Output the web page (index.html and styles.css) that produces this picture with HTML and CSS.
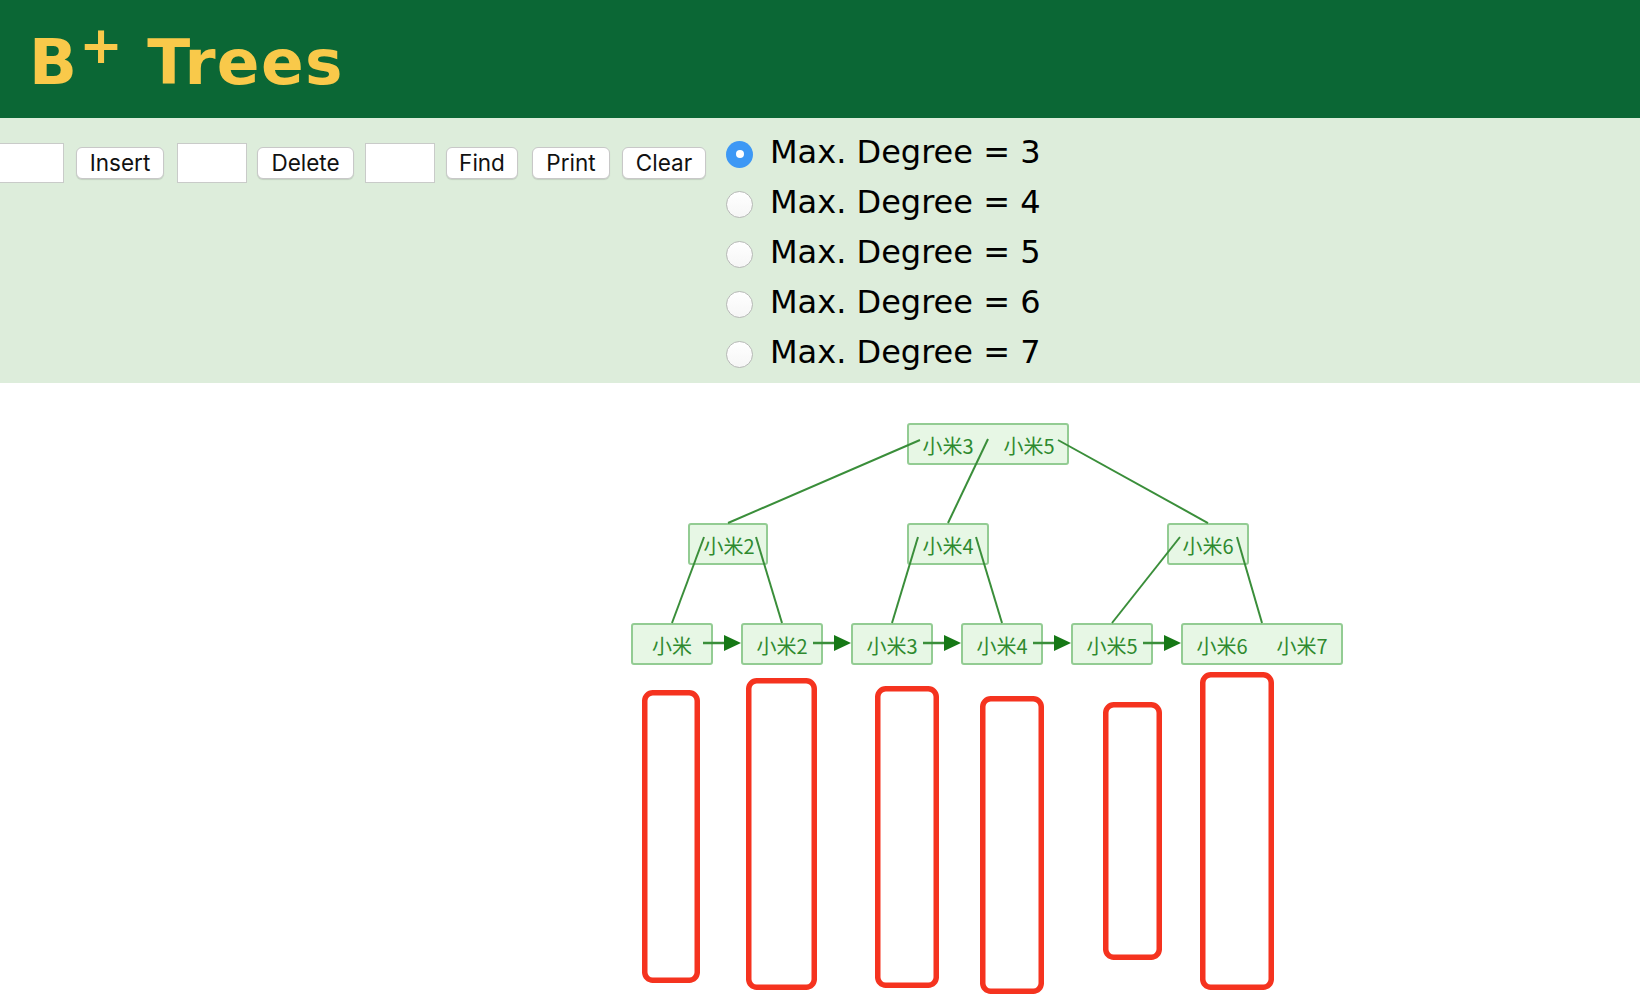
FILE: index.html
```html
<!DOCTYPE html>
<html lang="en">
<head>
<meta charset="utf-8">
<title>B+ Trees</title>
<link rel="stylesheet" href="styles.css">
</head>
<body>
<header class="header">
  <h1 class="title">B<sup class="plus">+</sup> Trees</h1>
</header>
<section class="panel">
  <div class="controls">
    <input class="field field-first" type="text">
    <button class="btn btn-insert">Insert</button>
    <input class="field field-2" type="text">
    <button class="btn btn-delete">Delete</button>
    <input class="field field-3" type="text">
    <button class="btn btn-find">Find</button>
    <button class="btn btn-print">Print</button>
    <button class="btn btn-clear">Clear</button>
  </div>
  <div class="degrees">
    <label class="degree"><input class="radio" type="radio" name="deg" checked><span class="degree-text">Max. Degree = 3</span></label>
    <label class="degree"><input class="radio" type="radio" name="deg"><span class="degree-text">Max. Degree = 4</span></label>
    <label class="degree"><input class="radio" type="radio" name="deg"><span class="degree-text">Max. Degree = 5</span></label>
    <label class="degree"><input class="radio" type="radio" name="deg"><span class="degree-text">Max. Degree = 6</span></label>
    <label class="degree"><input class="radio" type="radio" name="deg"><span class="degree-text">Max. Degree = 7</span></label>
  </div>
</section>
<main class="canvas">
  <svg class="tree" width="1640" height="625" viewBox="0 383 1640 625" xmlns="http://www.w3.org/2000/svg">
    <g class="nodes">
      <rect x="908" y="424" width="160" height="40" rx="2"/>
      <rect x="689" y="524" width="78" height="40" rx="2"/>
      <rect x="908" y="524" width="80" height="40" rx="2"/>
      <rect x="1168" y="524" width="80" height="40" rx="2"/>
      <rect x="632" y="624" width="80" height="40" rx="2"/>
      <rect x="742" y="624" width="80" height="40" rx="2"/>
      <rect x="852" y="624" width="80" height="40" rx="2"/>
      <rect x="962" y="624" width="80" height="40" rx="2"/>
      <rect x="1072" y="624" width="80" height="40" rx="2"/>
      <rect x="1182" y="624" width="160" height="40" rx="2"/>
    </g>
    <g class="edges">
      <line x1="920" y1="440" x2="728" y2="523"/>
      <line x1="988" y1="439" x2="948" y2="523"/>
      <line x1="1058" y1="440" x2="1208" y2="523"/>
      <line x1="704" y1="537" x2="672" y2="623"/>
      <line x1="756" y1="537" x2="782" y2="623"/>
      <line x1="918" y1="537" x2="892" y2="623"/>
      <line x1="976" y1="537" x2="1002" y2="623"/>
      <line x1="1180" y1="537" x2="1112" y2="623"/>
      <line x1="1237" y1="537" x2="1262" y2="623"/>
    </g>
    <g class="links">
      <line x1="703" y1="643" x2="726" y2="643"/>
      <line x1="813" y1="643" x2="836" y2="643"/>
      <line x1="923" y1="643" x2="946" y2="643"/>
      <line x1="1033" y1="643" x2="1056" y2="643"/>
      <line x1="1143" y1="643" x2="1166" y2="643"/>
    </g>
    <g class="heads">
      <polygon points="724,635 741,643 724,651"/>
      <polygon points="834,635 851,643 834,651"/>
      <polygon points="944,635 961,643 944,651"/>
      <polygon points="1054,635 1071,643 1054,651"/>
      <polygon points="1164,635 1181,643 1164,651"/>
    </g>
    <g class="keys">
      <text x="948" y="445">小米3</text>
      <text x="1029" y="445">小米5</text>
      <text x="729" y="545">小米2</text>
      <text x="948" y="545">小米4</text>
      <text x="1208" y="545">小米6</text>
      <text x="672" y="645">小米</text>
      <text x="782" y="645">小米2</text>
      <text x="892" y="645">小米3</text>
      <text x="1002" y="645">小米4</text>
      <text x="1112" y="645">小米5</text>
      <text x="1222" y="645">小米6</text>
      <text x="1302" y="645">小米7</text>
    </g>
    <g class="marks">
      <rect x="644.75" y="692.75" width="52.5" height="287.5" rx="8"/>
      <rect x="748.75" y="680.75" width="65.5" height="306.5" rx="8"/>
      <rect x="877.75" y="688.75" width="58.5" height="296.5" rx="8"/>
      <rect x="982.75" y="698.75" width="58.5" height="292.5" rx="8"/>
      <rect x="1105.75" y="704.75" width="53.5" height="252.5" rx="8"/>
      <rect x="1202.75" y="674.75" width="68.5" height="312.5" rx="8"/>
    </g>
  </svg>
</main>
</body>
</html>
```

FILE: styles.css
```css
html, body {
  margin: 0;
  padding: 0;
  background: #ffffff;
  overflow: hidden;
}

body {
  width: 1640px;
  height: 1008px;
  font-family: "DejaVu Sans", Verdana, sans-serif;
}

.header {
  height: 118px;
  background: #0b6735;
  box-sizing: border-box;
  padding: 31px 0 0 29px;
}

.title {
  margin: 0;
  font-family: "DejaVu Sans", Verdana, sans-serif;
  font-weight: bold;
  font-size: 63px;
  line-height: 1;
  letter-spacing: 1.3px;
  color: #f9c94a;
}

.plus {
  font-size: 52px;
  line-height: 0;
  vertical-align: 21px;
  letter-spacing: 0;
  margin-left: 1px;
  margin-right: 1px;
}

.panel {
  height: 265px;
  background: #ddeddb;
  display: flex;
  align-items: flex-start;
  box-sizing: border-box;
}

.controls {
  display: flex;
  align-items: center;
  height: 40px;
  margin-top: 25px;
  margin-left: -6px;
}

.field {
  width: 70px;
  height: 40px;
  box-sizing: border-box;
  border: 1px solid #c9cbc9;
  background: #ffffff;
  margin: 0;
  padding: 0;
  outline: none;
}

.field-2 { margin-left: 13px; }
.field-3 { margin-left: 11px; }

.btn {
  height: 32px;
  box-sizing: border-box;
  margin: 0;
  padding: 0;
  border: 1px solid #c8c8c8;
  border-radius: 6px;
  background: #ffffff;
  box-shadow: 0 1px 1px rgba(0, 0, 0, 0.12);
  font-family: Inter, "Liberation Sans", sans-serif;
  font-size: 22.5px;
  color: #111111;
  text-align: center;
  line-height: 30px;
}

.btn-insert { width: 88px; margin-left: 12px; }
.btn-delete { width: 97px; margin-left: 10px; }
.btn-find { width: 72px; margin-left: 11px; }
.btn-print { width: 78px; margin-left: 14px; }
.btn-clear { width: 84px; margin-left: 12px; }

.degrees {
  display: flex;
  flex-direction: column;
  margin-left: 20px;
  padding-top: 11px;
}

.degree {
  display: flex;
  align-items: center;
  height: 50px;
}

.radio {
  appearance: none;
  -webkit-appearance: none;
  width: 27px;
  height: 27px;
  margin: 0 17px 0 0;
  border-radius: 50%;
  box-sizing: border-box;
  border: 1px solid #b7b9b7;
  background: linear-gradient(#ffffff, #f6f6f6);
  position: relative;
  flex: none;
}

.radio:checked {
  border: none;
  background: #3d98f5;
}

.radio:checked::after {
  content: "";
  position: absolute;
  left: 50%;
  top: 50%;
  width: 8px;
  height: 8px;
  margin: -4px 0 0 -4px;
  border-radius: 50%;
  background: #ffffff;
}

.degree-text {
  font-family: "DejaVu Sans", Verdana, sans-serif;
  font-size: 32px;
  color: #000000;
  white-space: pre;
  margin-bottom: 5px;
}

.canvas {
  height: 625px;
}

.tree {
  display: block;
}

.edges line {
  stroke: #3a8e3a;
  stroke-width: 2;
}

.nodes rect {
  fill: #e7f7e5;
  stroke: #93cc93;
  stroke-width: 2;
}

.links line {
  stroke: #3a8e3a;
  stroke-width: 2.5;
}

.heads polygon {
  fill: #157815;
}

.keys text {
  font-family: "Noto Sans CJK SC", "Noto Sans", sans-serif;
  font-size: 20px;
  fill: #2f8a2f;
  text-anchor: middle;
  dominant-baseline: central;
}

.marks rect {
  fill: none;
  stroke: #f5331f;
  stroke-width: 5.5;
}
```
